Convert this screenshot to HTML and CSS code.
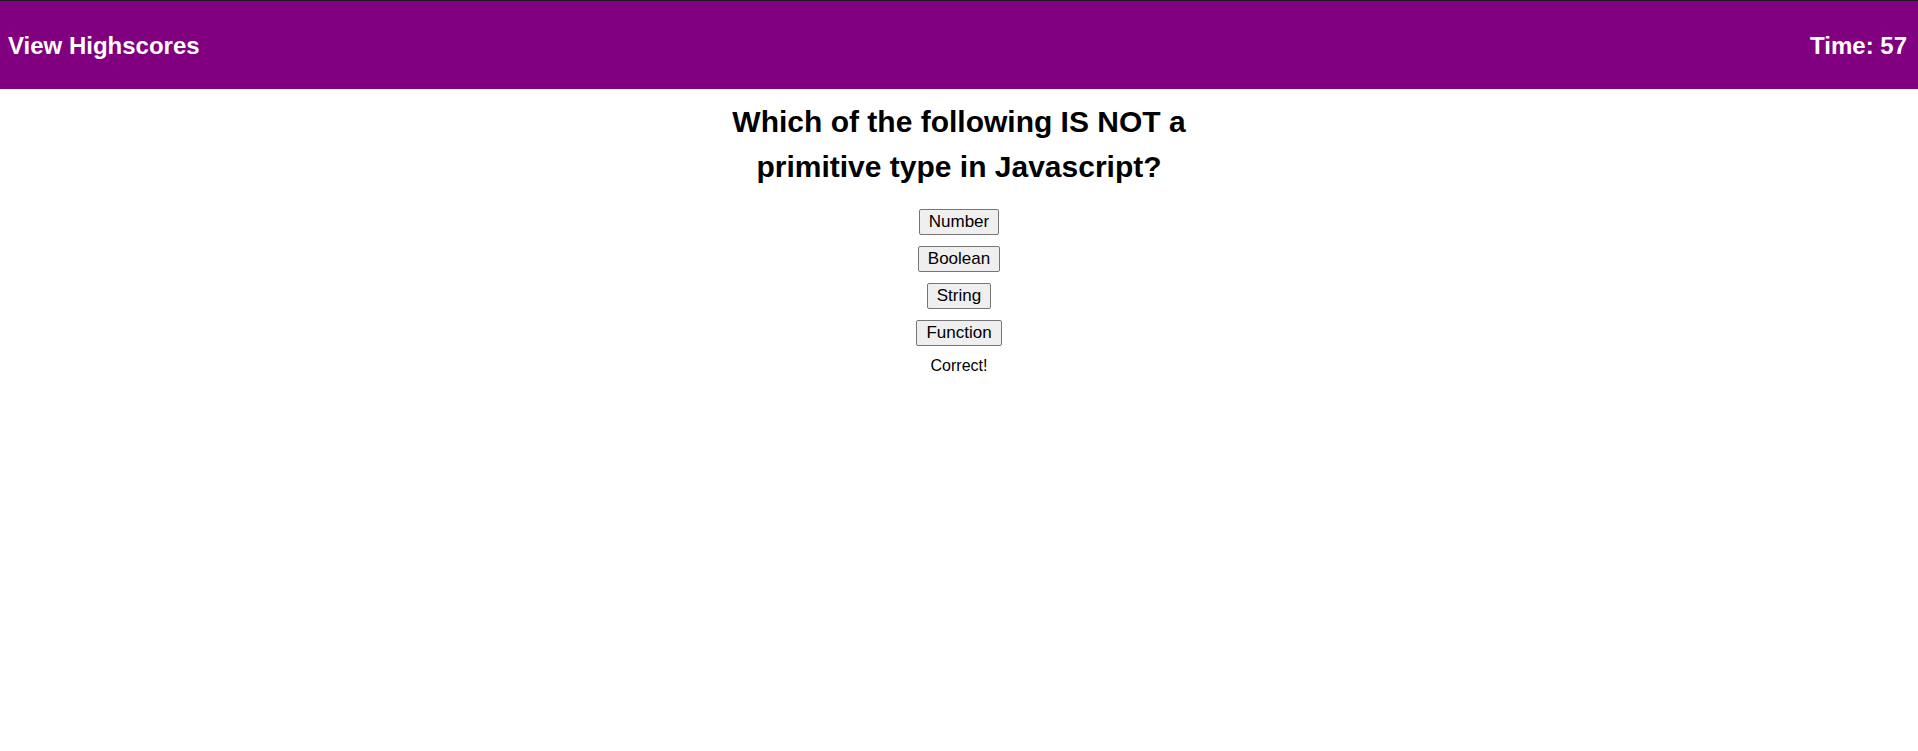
FILE: index.html
```html
<!DOCTYPE html>
<html lang="en">
<head>
<meta charset="utf-8">
<title>Code Quiz</title>
<link rel="stylesheet" href="styles.css">
</head>
<body>
<header class="topbar">
  <span class="topbar-link">View Highscores</span>
  <span class="topbar-timer">Time: 57</span>
</header>
<main class="quiz">
  <h2 class="question">Which of the following IS NOT a primitive type in Javascript?</h2>
  <div class="answers">
    <button class="answer">Number</button>
    <button class="answer">Boolean</button>
    <button class="answer">String</button>
    <button class="answer">Function</button>
    <p class="feedback">Correct!</p>
  </div>
</main>
</body>
</html>
```

FILE: styles.css
```css
html, body {
  margin: 0;
  padding: 0;
  background: #ffffff;
}

body {
  font-family: "Liberation Sans", Arial, sans-serif;
  color: #000000;
}

.topbar {
  box-sizing: border-box;
  height: 89px;
  border-top: 1px solid #1e1a22;
  background: #800080;
  color: #ffffff;
  display: flex;
  justify-content: space-between;
  align-items: center;
  padding: 2px 11px 0 8px;
  font-size: 24px;
  font-weight: bold;
}

.quiz {
  display: flex;
  flex-direction: column;
  align-items: center;
}

.question {
  width: 500px;
  margin: 10px 0 20px;
  font-size: 30px;
  line-height: 45px;
  font-weight: bold;
  text-align: center;
}

.answers {
  display: flex;
  flex-direction: column;
  align-items: center;
  gap: 11px;
}

.answer {
  font-family: "Liberation Sans", Arial, sans-serif;
  font-size: 17px;
  line-height: 20px;
  padding: 2px 9px;
  border: 1px solid #767676;
  border-radius: 2px;
  background: #efefef;
  color: #000000;
}

.feedback {
  margin: 0;
  font-size: 16px;
}
```
